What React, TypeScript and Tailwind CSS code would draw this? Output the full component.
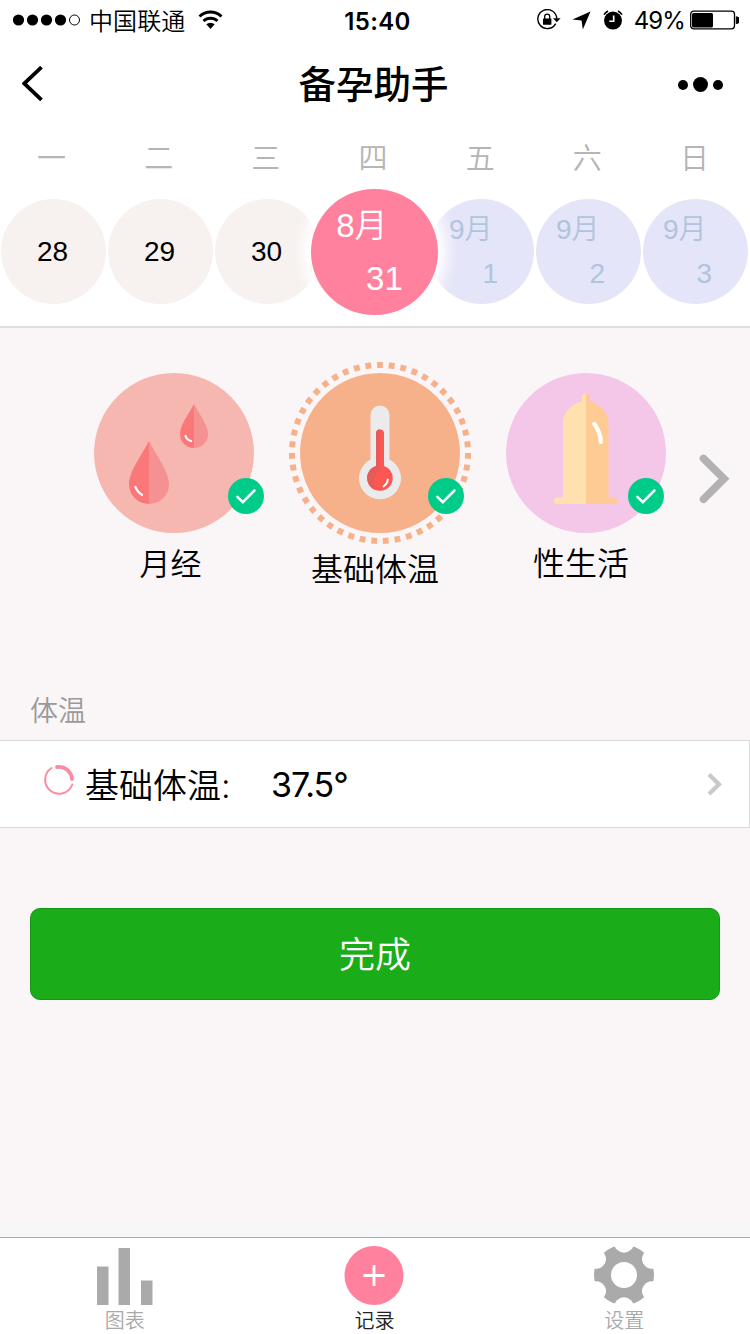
import React from "react";

const weekdays = ["一", "二", "三", "四", "五", "六", "日"];

const days = [
  { day: "28", state: "past" },
  { day: "29", state: "past" },
  { day: "30", state: "past" },
  { day: "31", month: "8月", state: "selected" },
  { day: "1", month: "9月", state: "future" },
  { day: "2", month: "9月", state: "future" },
  { day: "3", month: "9月", state: "future" },
];

const StatusBar = () => (
  <div className="h-10 flex items-center justify-between pl-[13px] pr-[11px] text-2xl leading-10">
    <div className="flex items-center w-[280px]">
      <svg width="68" height="12" viewBox="0 0 68 12">
        <circle cx="5.5" cy="6" r="5.6" />
        <circle cx="19.5" cy="6" r="5.6" />
        <circle cx="33.5" cy="6" r="5.6" />
        <circle cx="47.5" cy="6" r="5.6" />
        <circle cx="61.5" cy="6" r="5" fill="none" stroke="#000" />
      </svg>
      <span className="ml-2 pt-[3px] font-[350] tracking-[0.1px]">中国联通</span>
      <svg className="ml-[13px]" width="26" height="20" viewBox="0 0 26 20" fill="none" stroke="#000" strokeWidth="3">
        <path d="M1.5 6.5a16 16 0 0 1 22 0" />
        <path d="M5.5 11a10.3 10.3 0 0 1 14 0" />
        <path d="M8.3 14.3a6.2 6.2 0 0 1 8.4 0L12.5 19z" fill="#000" stroke="none" />
      </svg>
    </div>
    <span className="pt-[3px] pl-[3px] font-semibold tracking-[0.4px]">15:40</span>
    <div className="flex items-center justify-end w-[280px]">
      <svg width="24" height="22" viewBox="0 0 24 22">
        <path d="M18.7 14.6A9.5 9.5 0 1 1 19.8 9.5" fill="none" stroke="#000" strokeWidth="1.4" />
        <path d="M16 9.2h7.6l-3.8 4z" />
        <rect x="6" y="9.4" width="8.4" height="6.4" rx=".6" />
        <path d="M7.7 10V7.6a2.5 2.5 0 0 1 5 0V10" fill="none" stroke="#000" strokeWidth="1.3" />
      </svg>
      <svg className="ml-[11px]" width="19" height="19" viewBox="0 0 19 19">
        <path d="M18.5.5 10.8 18.5 9.6 9.6.5 8.4z" />
      </svg>
      <svg className="ml-3" width="20" height="20" viewBox="0 0 20 20">
        <circle cx="10" cy="10.6" r="9" />
        <path d="M1 4.6A11 11 0 0 1 5 1M19 4.6A11 11 0 0 0 15 1" fill="none" stroke="#000" strokeWidth="1.6" />
        <path d="M10.7 5.5v5.7H6.3" fill="none" stroke="#fff" strokeWidth="1.6" />
      </svg>
      <span className="ml-[11px] pt-[2px] tracking-[-0.9px]">49%</span>
      <svg className="ml-[5px]" width="49" height="20" viewBox="0 0 49 20">
        <rect x=".7" y="1.2" width="43.8" height="17.6" rx="3" fill="none" stroke="#000" strokeWidth="1.3" />
        <rect x="2" y="3" width="21" height="14.5" rx="1.5" />
        <path d="M46.3 6.8a3 3 0 0 1 0 6.8z" stroke="#000" />
      </svg>
    </div>
  </div>
);

const NavBar = () => (
  <div className="h-[88px] flex items-center justify-between px-[22px]">
    <svg width="60" height="36" viewBox="0 0 60 36" fill="none" stroke="#000" strokeWidth="3.8">
      <path d="M19.5 1.2 2.2 17.5l17.3 16.3" strokeLinejoin="miter" />
    </svg>
    <h1 className="pt-0.5 -ml-[3px] text-[37.5px] font-medium leading-[84px]">备孕助手</h1>
    <svg width="60" height="20" viewBox="0 0 60 20">
      <circle cx="15" cy="11" r="5" />
      <circle cx="32.5" cy="10.5" r="7.5" />
      <circle cx="50" cy="11" r="5" />
    </svg>
  </div>
);

const Calendar = () => (
  <div className="h-[200px] overflow-hidden border-b-2 border-[#dfdedf]">
    <div className="grid grid-cols-7 h-[61px] -ml-[2px] pr-[2px] text-center text-[29px] font-[350] leading-[62px] text-[#b5b5b5]">
      {weekdays.map((d) => (
        <span key={d}>{d}</span>
      ))}
    </div>
    <div className="grid grid-cols-7 h-[125px] items-center pr-px font-['Liberation_Sans','Noto_Sans_CJK_SC',sans-serif]">
      {days.map((d) => {
        if (d.state === "selected") {
          return (
            <div
              key={d.day}
              className="z-10 justify-self-center shrink-0 w-[126.5px] h-[126px] -mx-3 rounded-full bg-[#ff819e] text-white text-[33px] font-[350] shadow-[0_0_14px_9px_#fff]"
            >
              <p className="pt-3 pl-[25px] h-[63px] leading-[49px]">{d.month}</p>
              <p className="pr-[35px] text-right leading-[53px]">{d.day}</p>
            </div>
          );
        }
        if (d.state === "future") {
          return (
            <div key={d.day} className="-mt-px ml-px w-[105px] h-[105px] rounded-full bg-[#e5e5f9] text-[#b0c4de] text-[28px] font-[350]">
              <p className="pt-2 pl-[20px] h-[53px] leading-[46px]">{d.month}</p>
              <p className="pr-[36px] text-right leading-[44px]">{d.day}</p>
            </div>
          );
        }
        return (
          <div key={d.day} className="-mt-px ml-px w-[105px] h-[105px] pr-0.5 rounded-full bg-[#f7f1ef] text-center text-[28px] leading-[106px]">
            {d.day}
          </div>
        );
      })}
    </div>
  </div>
);

const CheckBadge = ({ className }: { className: string }) => (
  <svg className={`absolute top-[105px] ${className}`} width="36" height="36" viewBox="0 0 36 36">
    <circle cx="18" cy="18" r="18" fill="#00cb88" />
    <path d="m9.4 18.8 5.4 5.4L26.4 12.5" fill="none" stroke="#fff" strokeWidth="2.5" strokeLinecap="round" />
  </svg>
);

const PeriodIcon = () => (
  <svg width="160" height="160" viewBox="0 0 160 160">
    <circle cx="80" cy="80" r="80" fill="#f6b7b1" />
    <path d="M55 68C48 82 35 98 35 111.5a20 19.5 0 0 0 20 19.5z" fill="#fa7879" />
    <path d="M55 68c7 14 20 30 20 43.5A20 19.5 0 0 1 55 131z" fill="#f59191" />
    <path d="M100 31c-5 10-14 20.5-14 30.2A14 13.8 0 0 0 100 75z" fill="#fa7879" />
    <path d="M100 31c5 10 14 20.5 14 30.2A14 13.8 0 0 1 100 75z" fill="#f59191" />
    <path d="M41.5 114c1.2 3.5 3.4 6 6.5 7.8M91.5 63c1 2.8 3 4.5 5.6 5" fill="none" stroke="#fff" strokeWidth="2.2" strokeLinecap="round" />
  </svg>
);

const ThermometerIcon = () => (
  <svg width="160" height="160" viewBox="0 0 160 160">
    <circle cx="80" cy="80" r="80" fill="#f6b18a" />
    <path d="M70.5 42a9.5 9.5 0 0 1 19 0v44.5a21 21 0 1 1-19 0z" fill="#ebebeb" />
    <path d="M76 60.5a4 4 0 0 1 8 0v32.4a12.8 12.8 0 1 1-8 0z" fill="#fc5753" />
    <path d="M80 56.5a4 4 0 0 0-4 4v32.4A12.8 12.8 0 0 0 75 117c-3-8 0-17 5-21z" fill="#e45b57" />
    <path d="M87.8 106.5c-.3 3-1.7 5.2-4.2 7" fill="none" stroke="#fff" strokeWidth="2" strokeLinecap="round" />
  </svg>
);

const IntimacyIcon = () => (
  <svg width="160" height="160" viewBox="0 0 160 160">
    <circle cx="80" cy="80" r="80" fill="#f4c6e7" />
    <path d="M80 20.5a4 4 0 0 0-4 4v4C64.5 31 57 39.5 57 51v73.5h-6a3.2 3.2 0 0 0 0 6.5h29z" fill="#ffe0ae" />
    <path d="M80 20.5a4 4 0 0 1 4 4v4c11 2.5 18.500 11 18.500 22.500v73.500h5.500a3.200 3.200 0 0 1 0 6.500H80z" fill="#ffcb94" />
    <path d="M88.3 51c4 5.5 6.3 11.5 6.6 18" fill="none" stroke="#fff" strokeWidth="4.2" strokeLinecap="round" />
  </svg>
);

const Categories = () => (
  <div className="flex h-[246px] pt-[45px] pl-[94px] gap-[46px] text-[32px] font-[350] text-center whitespace-nowrap">
    <div className="relative w-40">
      <PeriodIcon />
      <CheckBadge className="left-[134px]" />
      <p className="-ml-[7px] text-[31px] leading-[61px]">月经</p>
    </div>
    <div className="relative w-40">
      <ThermometerIcon />
      {/* dotted ring around the active category */}
      <svg className="absolute -top-[11px] -left-[11px]" width="182" height="182" viewBox="0 0 182 182">
        <circle
          cx="91"
          cy="91"
          r="88"
          fill="none"
          stroke="#f6b18a"
          strokeWidth="6"
          pathLength="94"
          strokeDasharray="1 1"
          strokeDashoffset="0.5"
          transform="rotate(-90 91 91)"
        />
      </svg>
      <CheckBadge className="left-[128px]" />
      <p className="-ml-[10px] pt-1.5 leading-[62px]">基础体温</p>
    </div>
    <div className="relative w-40">
      <IntimacyIcon />
      <CheckBadge className="left-[122px]" />
      <p className="-ml-[10px] leading-[62px]">性生活</p>
    </div>
    <svg className="-ml-[14px] mt-[80px]" width="34" height="52" viewBox="0 0 34 52">
      <path d="m5.5 5.5 20.5 20.3L5.5 46.3" fill="none" stroke="#b2b2b2" strokeWidth="7.6" strokeLinecap="round" />
    </svg>
  </div>
);

const TemperatureRow = () => (
  <div className="h-[88px] flex items-center bg-white border border-l-0 border-[#d9d9d9] pl-[43px] text-[34px] leading-[86px]">
    <svg className="-mt-2" width="32" height="32" viewBox="0 0 32 32" fill="none" stroke="#ff8aa3" strokeLinecap="round">
      <path d="M29.3 20.5A14 14 0 1 1 8.5 4" strokeWidth="2" />
      <path d="M14 3A13.2 13.2 0 0 1 29 15" strokeWidth="3.8" />
    </svg>
    <span className="ml-[10px] pt-1 w-[186px] font-[350]">基础体温:</span>
    <span className="pt-0.5 font-normal tracking-[-0.9px]">37.5°</span>
    <svg className="ml-auto mr-[25px]" width="18" height="24" viewBox="0 0 18 24">
      <path d="m3 2.5 10 9.7L3 22" fill="none" stroke="#c8c8cd" strokeWidth="4.2" />
    </svg>
  </div>
);

const TabBar = () => (
  <div className="mt-auto border-t-[10px] border-[#f7f7f7]">
    <div className="h-[97px] grid grid-cols-3 pr-px border-t border-[#a9a9a9] bg-white text-center text-[20px] font-[350] leading-[32px] text-[#a9a9a9]">
      <div className="flex flex-col items-center pt-[7px]">
        <svg width="56" height="60" viewBox="0 0 56 60" fill="#aaa">
          <rect x="0" y="21.5" width="11.5" height="38.5" />
          <rect x="21.5" y="3" width="11.5" height="57" />
          <rect x="44" y="35.5" width="11.5" height="24.5" />
        </svg>
        <span>图表</span>
      </div>
      <div className="flex flex-col items-center pt-[7px] text-[#222]">
        <svg width="60" height="60" viewBox="0 0 60 60">
          <circle cx="30" cy="30.5" r="29.5" fill="#ff819e" />
          <path d="M19.5 30.5h21M30 20v21" stroke="#fff" strokeWidth="2.8" />
        </svg>
        <span>记录</span>
      </div>
      <div className="flex flex-col items-center pt-[7px]">
        <svg width="60" height="60" viewBox="0 0 60 60">
          <mask id="gear">
            <circle cx="30" cy="30" r="30" fill="#fff" />
            <g fill="#000">
              <circle cx="30" cy="30" r="13" />
              {[0, 60, 120, 180, 240, 300].map((a) => (
                <circle key={a} cx="30" cy="-2.1" r="9.8" transform={`rotate(${a} 30 30)`} />
              ))}
            </g>
          </mask>
          <rect width="60" height="60" fill="#aaa" mask="url(#gear)" />
        </svg>
        <span>设置</span>
      </div>
    </div>
  </div>
);

export default function App() {
  return (
    <div className="w-[750px] h-[1334px] flex flex-col overflow-hidden bg-[#faf6f8] text-black font-['Inter','Noto_Sans_CJK_SC',sans-serif]">
      <div className="bg-white">
        <StatusBar />
        <NavBar />
        <Calendar />
      </div>
      <Categories />
      <h2 className="pl-[30px] mt-[116px] h-[50px] text-[28px] font-[350] leading-[43px] text-[#999]">体温</h2>
      <TemperatureRow />
      <button className="mx-[30px] mt-20 h-[92px] rounded-[10px] border border-[#179616] bg-[#1aad19] pt-0.5 text-white text-[36px] font-[350] leading-[88px]">
        完成
      </button>
      <TabBar />
    </div>
  );
}
